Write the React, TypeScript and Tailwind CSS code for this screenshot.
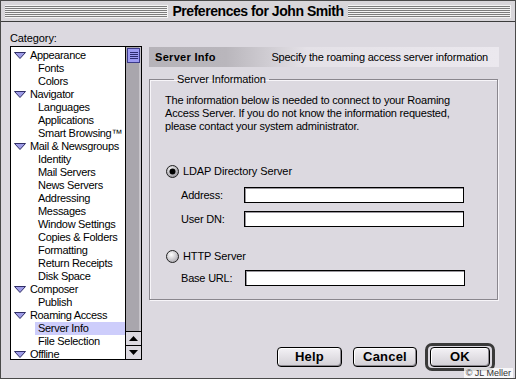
import React from 'react';

const FONT = { fontFamily: '"Liberation Sans", Arial, sans-serif' };

type Row = { label: string; parent?: boolean; selected?: boolean };

const rows: Row[] = [
  { label: 'Appearance', parent: true },
  { label: 'Fonts' },
  { label: 'Colors' },
  { label: 'Navigator', parent: true },
  { label: 'Languages' },
  { label: 'Applications' },
  { label: 'Smart Browsing™' },
  { label: 'Mail & Newsgroups', parent: true },
  { label: 'Identity' },
  { label: 'Mail Servers' },
  { label: 'News Servers' },
  { label: 'Addressing' },
  { label: 'Messages' },
  { label: 'Window Settings' },
  { label: 'Copies & Folders' },
  { label: 'Formatting' },
  { label: 'Return Receipts' },
  { label: 'Disk Space' },
  { label: 'Composer', parent: true },
  { label: 'Publish' },
  { label: 'Roaming Access', parent: true },
  { label: 'Server Info', selected: true },
  { label: 'File Selection' },
  { label: 'Offline', parent: true },
];

function Disclosure() {
  return (
    <svg width="12" height="7" viewBox="0 0 12 7" className="shrink-0">
      <polygon points="0.5,0.5 11.5,0.5 6,6.5" fill="#9d9be6" stroke="#2f2d66" strokeWidth="1" />
    </svg>
  );
}

function Radio({ on }: { on?: boolean }) {
  return (
    <svg width="13" height="13" viewBox="0 0 13 13" className="shrink-0">
      <defs>
        <radialGradient id={on ? 'rOn' : 'rOff'} cx="0.4" cy="0.35" r="0.7">
          <stop offset="0" stopColor="#ffffff" />
          <stop offset="1" stopColor={on ? '#8d8a92' : '#a9a6ad'} />
        </radialGradient>
      </defs>
      <circle cx="6.5" cy="6.5" r="6" fill={`url(#${on ? 'rOn' : 'rOff'})`} stroke="#222" strokeWidth="1" />
      {on && <circle cx="6.5" cy="6.5" r="3" fill="#000" />}
    </svg>
  );
}

function Stripes() {
  return (
    <div className="flex-1 h-[13px] bg-[repeating-linear-gradient(to_bottom,#f4f4f4_0px,#f4f4f4_1px,#7d7d7d_1px,#7d7d7d_2px)] border-r border-[#f4f4f4]" />
  );
}

function Field({ label, labelW }: { label: string; labelW: string }) {
  return (
    <div className="flex items-center h-[16px] pl-[16px]">
      <span className={`${labelW} text-[11px] tracking-[-0.2px] text-black`}>{label}</span>
      <div className="w-[220px] h-[16px] bg-white border border-black shadow-[inset_1px_1px_0_#9a979e]" />
    </div>
  );
}

function MacButton({ children, w }: { children: React.ReactNode; w: string }) {
  return (
    <div
      className={`${w} h-[20px] rounded-[4px] border border-black bg-[linear-gradient(to_bottom,#f4f2f6,#d2cfd5)] shadow-[inset_-1px_-1px_0_#8c8990,inset_1px_1px_0_#ffffff] flex items-center justify-center text-[13px] font-bold text-black tracking-[0.2px]`}
    >
      {children}
    </div>
  );
}

export default function App() {
  return (
    <div
      style={FONT}
      className="relative w-[516px] h-[379px] overflow-hidden bg-[#dcd9e0] border border-[#4a4a4a] text-black"
    >
      {/* Title bar */}
      <div className="h-[21px] flex items-center px-[4px] bg-[#d8d6da] border-b border-[#3c3c3c]">
        <Stripes />
        <div className="px-[4px] text-[14px] font-bold leading-[20px] tracking-[-0.45px]">Preferences for John Smith</div>
        <Stripes />
      </div>

      <div className="flex pl-[9px] pt-[10px]">
        {/* Category column */}
        <div className="w-[132px] flex flex-col">
          <div className="h-[14px] text-[11px] leading-[12px] tracking-[-0.1px]">Category:</div>
          <div className="h-[314px] flex border border-black bg-white">
            <div className="flex-1 min-w-0 overflow-hidden pt-[2px]">
              {rows.map((r) =>
                r.parent ? (
                  <div key={r.label} className="h-[13px] flex items-center pl-[3px] gap-[4px] whitespace-nowrap text-[11px] leading-[13px] tracking-[-0.35px]">
                    <Disclosure />
                    <span>{r.label}</span>
                  </div>
                ) : (
                  <div key={r.label} className="h-[13px] flex pl-[24px]">
                    <div
                      className={`flex-1 pl-[3px] whitespace-nowrap text-[11px] leading-[13px] tracking-[-0.3px] ${r.selected ? 'bg-[#cdcdfb]' : ''}`}
                    >
                      {r.label}
                    </div>
                  </div>
                )
              )}
            </div>
            {/* Scrollbar */}
            <div className="w-[16px] shrink-0 flex flex-col border-l border-black bg-[#a9a6ad] shadow-[inset_-2px_0_0_#c7c4ca]">
              <div className="mx-[1px] mt-[1px] h-[15px] bg-[#9c9af2] border border-[#3b3a8a] flex flex-col items-center justify-center gap-[1px]">
                <div className="w-[8px] h-px bg-[#2c2b70]" />
                <div className="w-[8px] h-px bg-[#2c2b70]" />
                <div className="w-[8px] h-px bg-[#2c2b70]" />
                <div className="w-[8px] h-px bg-[#2c2b70]" />
              </div>
              <div className="flex-1" />
              <div className="h-[14px] border-t border-black bg-[#dcd9e0] flex items-center justify-center">
                <svg width="9" height="5" viewBox="0 0 9 5"><polygon points="4.5,0 9,5 0,5" fill="#000" /></svg>
              </div>
              <div className="h-[14px] border-t border-black bg-[#dcd9e0] flex items-center justify-center">
                <svg width="9" height="5" viewBox="0 0 9 5"><polygon points="0,0 9,0 4.5,5" fill="#000" /></svg>
              </div>
            </div>
          </div>
        </div>

        {/* Right panel */}
        <div className="ml-[7px] w-[350px] pt-[15px] flex flex-col">
          <div className="h-[20px] flex items-center justify-between pl-[6px] pr-[11px] bg-[linear-gradient(to_right,#b6b3b9_0%,#b9b6bc_22%,#e4e1e7_45%,#ebe8ee_100%)]">
            <span className="text-[11px] font-bold tracking-[0.3px]">Server Info</span>
            <span className="text-[11px] tracking-[-0.2px]">Specify the roaming access server information</span>
          </div>

          <fieldset className="mt-[5px] w-[349px] border border-[#8a878e] shadow-[inset_1px_1px_0_#f7f5f9,1px_1px_0_#f7f5f9] px-[15px] pb-[13px]">
            <legend className="ml-[9px] px-[3px] text-[11px] leading-[14px] tracking-[-0.1px]">Server Information</legend>
            <p className="pt-[8px] text-[11px] leading-[13px] tracking-[-0.2px]">
              The information below is needed to connect to your Roaming
              <br />
              Access Server. If you do not know the information requested,
              <br />
              please contact your system administrator.
            </p>

            <div className="mt-[31px] h-[14px] flex items-center gap-[4px] pl-[1px]">
              <Radio on />
              <span className="text-[11px] tracking-[-0.1px]">LDAP Directory Server</span>
            </div>
            <div className="mt-[9px]">
              <Field label="Address:" labelW="w-[63px]" />
            </div>
            <div className="mt-[8px]">
              <Field label="User DN:" labelW="w-[63px]" />
            </div>

            <div className="mt-[22px] h-[14px] flex items-center gap-[4px] pl-[1px]">
              <Radio />
              <span className="text-[11px] tracking-[-0.1px]">HTTP Server</span>
            </div>
            <div className="mt-[7px]">
              <Field label="Base URL:" labelW="w-[64px]" />
            </div>
          </fieldset>

          <div className="mt-[43px] flex items-center justify-end pr-[4px]">
            <MacButton w="w-[65px]">Help</MacButton>
            <div className="ml-[11px]">
              <MacButton w="w-[64px]">Cancel</MacButton>
            </div>
            <div className="ml-[8px] h-[28px] w-[70px] rounded-[7px] border-[3px] border-[#3a3a3a] bg-[#dcd9e0] flex items-center justify-center">
              <MacButton w="w-[60px]">OK</MacButton>
            </div>
          </div>
        </div>
      </div>

      <div className="absolute right-[2px] bottom-0 h-[10px] px-[2px] bg-white/80 text-[9px] leading-[10px] text-[#333]">
        © JL Meller
      </div>
    </div>
  );
}
